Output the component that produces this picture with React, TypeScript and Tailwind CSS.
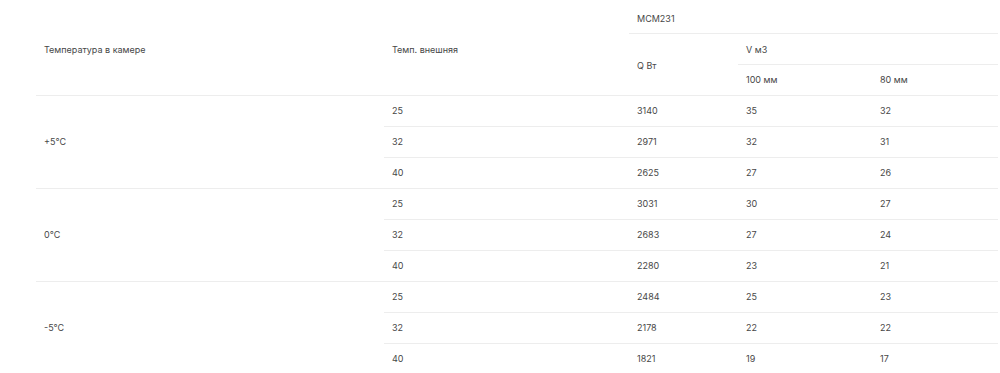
const groups = [
  {
    label: "+5°C",
    rows: [
      ["25", "3140", "35", "32"],
      ["32", "2971", "32", "31"],
      ["40", "2625", "27", "26"],
    ],
  },
  {
    label: "0°C",
    rows: [
      ["25", "3031", "30", "27"],
      ["32", "2683", "27", "24"],
      ["40", "2280", "23", "21"],
    ],
  },
  {
    label: "-5°C",
    rows: [
      ["25", "2484", "25", "23"],
      ["32", "2178", "22", "22"],
      ["40", "1821", "19", "17"],
    ],
  },
];

const cell = "px-2 py-0 align-middle text-left font-normal";
const line = "border-t border-[#ededed]";

export default function App() {
  return (
    <div className="h-[373px] w-[1000px] overflow-hidden bg-white pl-[36px] pt-[2px] font-['Inter','Liberation_Sans',sans-serif] text-[9px] text-[#474747]">
      <table className="w-[962px] table-fixed border-separate border-spacing-0">
        <colgroup>
          <col className="w-[348px]" />
          <col className="w-[245px]" />
          <col className="w-[109px]" />
          <col className="w-[134px]" />
          <col className="w-[126px]" />
        </colgroup>
        <thead>
          <tr className="h-[31px]">
            <th rowSpan={3} className={`${cell} pt-[3px]`}>
              Температура в камере
            </th>
            <th rowSpan={3} className={`${cell} pt-[3px]`}>
              Темп. внешняя
            </th>
            <th colSpan={3} className={`${cell} pt-[3px]`}>
              MCM231
            </th>
          </tr>
          <tr className="h-[31px]">
            <th rowSpan={2} className={`${cell} ${line} pt-[2px]`}>
              Q Вт
            </th>
            <th colSpan={2} className={`${cell} ${line} pt-[2px]`}>
              V м3
            </th>
          </tr>
          <tr className="h-[31px]">
            <th className={`${cell} ${line}`}>100 мм</th>
            <th className={`${cell} ${line}`}>80 мм</th>
          </tr>
        </thead>
        <tbody>
          {groups.map((g) =>
            g.rows.map((r, i) => (
              <tr key={g.label + i} className="h-[31px]">
                {i === 0 && (
                  <td rowSpan={3} className={`${cell} ${line}`}>
                    {g.label}
                  </td>
                )}
                {r.map((v, j) => (
                  <td key={j} className={`${cell} ${line}`}>
                    {v}
                  </td>
                ))}
              </tr>
            ))
          )}
        </tbody>
      </table>
    </div>
  );
}
